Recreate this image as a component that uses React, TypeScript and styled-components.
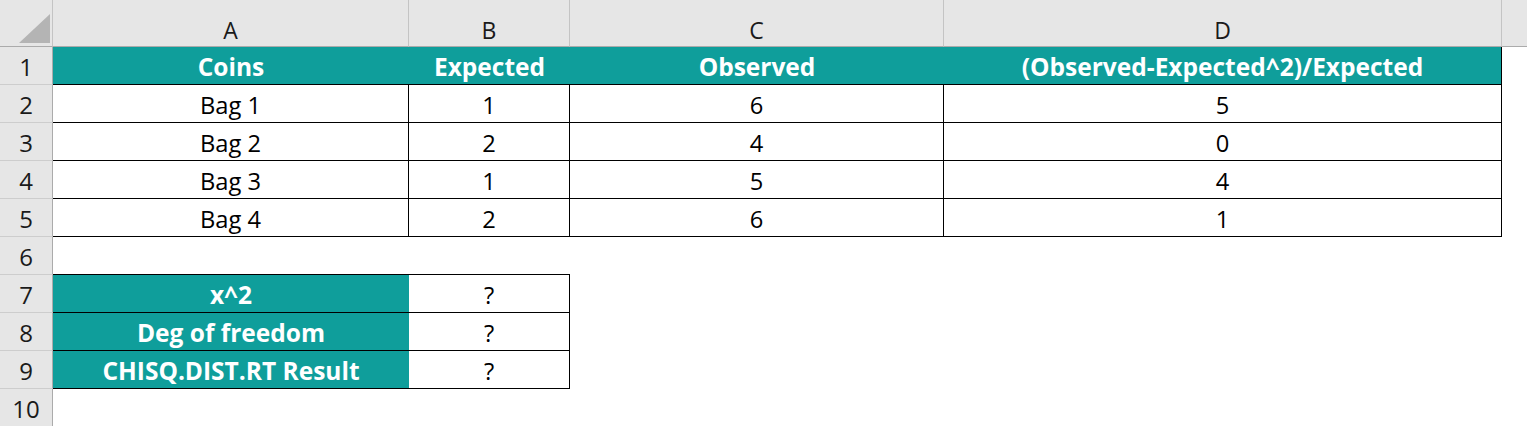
import React from "react";
import styled, { createGlobalStyle } from "styled-components";

const Global = createGlobalStyle`
  html, body { margin: 0; padding: 0; background: #ffffff; }
  body { overflow: hidden; }
`;

const Sheet = styled.div`
  display: grid;
  grid-template-columns: 53px 356px 161px 374px 558px 1fr;
  grid-template-rows: 47px repeat(10, 38px);
  width: 1527px;
  height: 426px;
  overflow: hidden;
  background: #ffffff;
`;

const Corner = styled.div`
  position: relative;
  background: #e6e6e6;
  border-right: 1px solid #c4c4c4;
  border-bottom: 1px solid #ababab;
  box-sizing: border-box;
`;

const CornerTriangle = styled.svg`
  position: absolute;
  right: 2px;
  bottom: 3px;
`;

const ColHead = styled.div<{ $last?: boolean }>`
  display: flex;
  align-items: center;
  justify-content: center;
  padding-top: 14px;
  box-sizing: border-box;
  background: #e6e6e6;
  border-right: ${(p) => (p.$last ? "none" : "1px solid #c4c4c4")};
  border-bottom: 1px solid #ababab;
  font-family: "Open Sans", "Noto Sans", sans-serif;
  font-size: 23px;
  color: #1a1a1a;
`;

const RowHead = styled.div`
  display: flex;
  align-items: center;
  justify-content: center;
  padding-top: 2px;
  box-sizing: border-box;
  background: #e6e6e6;
  border-right: 1px solid #ababab;
  border-bottom: 1px solid #cdcdcd;
  font-family: "Open Sans", "Noto Sans", sans-serif;
  font-size: 24px;
  color: #1a1a1a;
`;

type CellProps = {
  $teal?: boolean;
  $t?: boolean;
  $r?: boolean;
  $b?: boolean;
  $l?: boolean;
};

const Cell = styled.div<CellProps>`
  display: flex;
  align-items: center;
  justify-content: center;
  padding-top: 2px;
  box-sizing: border-box;
  background: ${(p) => (p.$teal ? "#0f9e9b" : "#ffffff")};
  color: ${(p) => (p.$teal ? "#ffffff" : "#000000")};
  font-weight: ${(p) => (p.$teal ? 700 : 400)};
  font-family: "Open Sans", "Noto Sans", sans-serif;
  font-size: ${(p) => (p.$teal ? "24.5px" : "23.7px")};
  white-space: nowrap;
  border-top: ${(p) => (p.$t ? "1px solid #000" : "none")};
  border-right: ${(p) => (p.$r ? "1px solid #000" : "none")};
  border-bottom: ${(p) => (p.$b ? "1px solid #000" : "none")};
  border-left: ${(p) => (p.$l ? "1px solid #000" : "none")};
`;

const cols = ["A", "B", "C", "D", ""];

const dataRows = [
  ["Bag 1", "1", "6", "5"],
  ["Bag 2", "2", "4", "0"],
  ["Bag 3", "1", "5", "4"],
  ["Bag 4", "2", "6", "1"],
];

const summary = ["x^2", "Deg of freedom", "CHISQ.DIST.RT Result"];

export default function App() {
  return (
    <>
      <Global />
      <Sheet>
        <Corner>
          <CornerTriangle width="31" height="29" viewBox="0 0 31 29">
            <polygon points="0,29 31,29 31,0" fill="#b4b4b4" />
          </CornerTriangle>
        </Corner>
        {cols.map((c, i) => (
          <ColHead key={i} $last={i === cols.length - 1}>
            {c}
          </ColHead>
        ))}

        <RowHead>1</RowHead>
        <Cell $teal $b>Coins</Cell>
        <Cell $teal $b>Expected</Cell>
        <Cell $teal $b>Observed</Cell>
        <Cell $teal $b $r>(Observed-Expected^2)/Expected</Cell>
        <Cell />

        {dataRows.map((row, ri) => (
          <React.Fragment key={ri}>
            <RowHead>{ri + 2}</RowHead>
            {row.map((v, ci) => (
              <Cell key={ci} $b $r>
                {v}
              </Cell>
            ))}
            <Cell />
          </React.Fragment>
        ))}

        <RowHead>6</RowHead>
        <Cell $b />
        <Cell $b />
        <Cell />
        <Cell />
        <Cell />

        {summary.map((s, i) => (
          <React.Fragment key={s}>
            <RowHead>{i + 7}</RowHead>
            <Cell $teal $b>{s}</Cell>
            <Cell $b $r>?</Cell>
            <Cell />
            <Cell />
            <Cell />
          </React.Fragment>
        ))}

        <RowHead>10</RowHead>
        <Cell />
        <Cell />
        <Cell />
        <Cell />
        <Cell />
      </Sheet>
    </>
  );
}
